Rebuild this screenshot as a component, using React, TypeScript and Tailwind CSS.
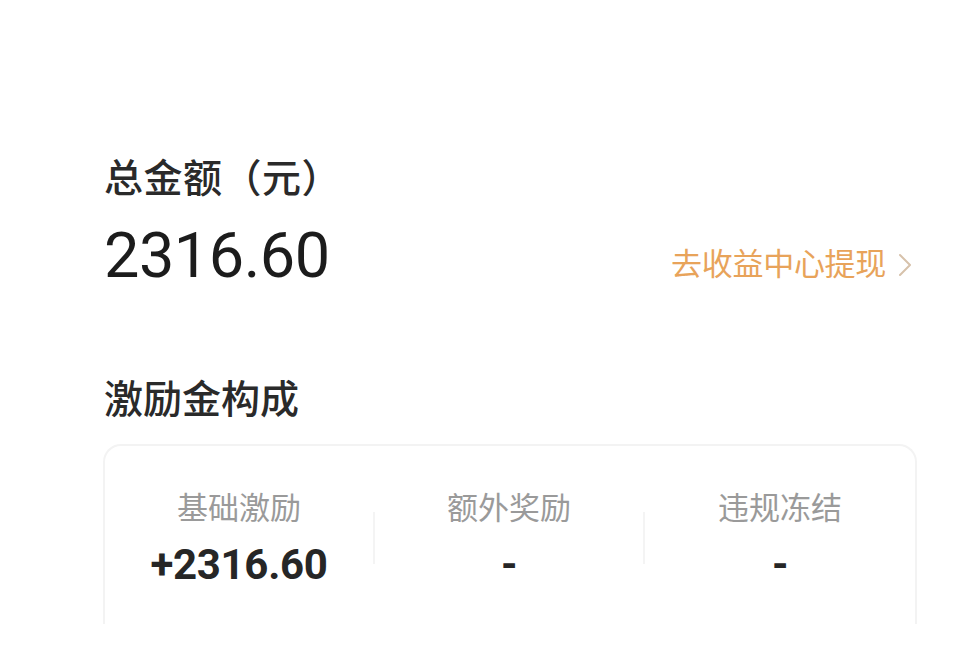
import React from "react";

const font = { fontFamily: '"Roboto", "Noto Sans CJK SC", sans-serif' };

const items = [
  { label: "基础激励", value: "+2316.60" },
  { label: "额外奖励", value: "-" },
  { label: "违规冻结", value: "-" },
];

const App = () => {
  return (
    <div
      className="w-[968px] h-[672px] overflow-hidden bg-white pl-[104px] pr-[51px] pt-[155px]"
      style={font}
    >
      <div className="text-[39px] leading-[48px] text-[#2a2a2a] font-medium tracking-[0.5px]">
        总金额（元）
      </div>
      <div className="flex items-center justify-between mt-[21px]">
        <div className="text-[63px] leading-[64px] text-[#1c1c1c] font-normal tracking-[-0.5px]">
          2316.60
        </div>
        <div className="flex items-center gap-[12px] text-[31px] text-[#e8a35a] mt-[18px] mr-[5px]">
          <span className="tracking-[-0.3px]">去收益中心提现</span>
          <svg width="14" height="24" viewBox="0 0 14 24" fill="none">
            <path
              d="M2 2l10 10L2 22"
              stroke="#d7c2ab"
              strokeWidth="2"
              strokeLinecap="round"
              strokeLinejoin="round"
            />
          </svg>
        </div>
      </div>

      <div className="mt-[88px] text-[39px] leading-[46px] text-[#2a2a2a] font-medium">
        激励金构成
      </div>

      <div className="mt-[21px] -ml-[1px] h-[180px] rounded-t-[18px] border-t-2 border-x-2 border-[#f3f3f3] grid grid-cols-3 pt-[44px]">
        {items.map((it, i) => (
          <div key={i} className="flex">
            <div className="flex-1 flex flex-col items-center">
              <div className="text-[31px] leading-[38px] text-[#9a9a9a]">
                {it.label}
              </div>
              <div className="mt-[12px] text-[42px] leading-[50px] font-bold text-[#262626] tracking-[-0.3px]">
                {it.value}
              </div>
            </div>
            {i < 2 && <div className="w-[2px] h-[52px] mt-[22px] bg-[#f4f4f4]" />}
          </div>
        ))}
      </div>
    </div>
  );
};

export default App;
